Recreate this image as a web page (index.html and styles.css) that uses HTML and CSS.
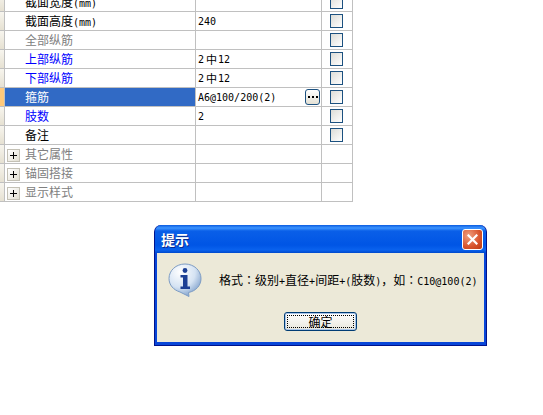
FILE: index.html
```html
<!DOCTYPE html>
<html lang="en">
<head>
  <meta charset="UTF-8" />
  <title>提示</title>
  <link rel="stylesheet" href="styles.css">
</head>
<body>

<!-- Property grid -->
<div class="grid">
  <div class="row">
    <div class="gutter"></div>
    <div class="name">截面宽度<span class="unit">(mm)</span></div>
    <div class="value"></div>
    <div class="check"><span class="box"></span></div>
  </div>
  <div class="row">
    <div class="gutter"></div>
    <div class="name">截面高度<span class="unit">(mm)</span></div>
    <div class="value"><span class="num">240</span></div>
    <div class="check"><span class="box"></span></div>
  </div>
  <div class="row">
    <div class="gutter"></div>
    <div class="name grey">全部纵筋</div>
    <div class="value"></div>
    <div class="check"><span class="box"></span></div>
  </div>
  <div class="row">
    <div class="gutter"></div>
    <div class="name blue">上部纵筋</div>
    <div class="value"><span class="num">2</span><span class="bar">中</span><span class="num">12</span></div>
    <div class="check"><span class="box"></span></div>
  </div>
  <div class="row">
    <div class="gutter"></div>
    <div class="name blue">下部纵筋</div>
    <div class="value"><span class="num">2</span><span class="bar">中</span><span class="num">12</span></div>
    <div class="check"><span class="box"></span></div>
  </div>
  <div class="row">
    <div class="gutter active"></div>
    <div class="name selected">箍筋</div>
    <div class="value editing">
      <span class="num">A6@100/200(2)</span>
      <button class="more">
        <svg width="10" height="2" viewBox="0 0 10 2"><path d="M0 0h2v2H0zM4 0h2v2H4zM8 0h2v2H8z" fill="#000"/></svg>
      </button>
    </div>
    <div class="check"><span class="box"></span></div>
  </div>
  <div class="row">
    <div class="gutter"></div>
    <div class="name blue">肢数</div>
    <div class="value"><span class="num">2</span></div>
    <div class="check"><span class="box"></span></div>
  </div>
  <div class="row">
    <div class="gutter"></div>
    <div class="name">备注</div>
    <div class="value"></div>
    <div class="check"><span class="box"></span></div>
  </div>
  <div class="row group">
    <div class="gutter"><span class="plus"></span></div>
    <div class="name grey">其它属性</div>
    <div class="value"></div>
    <div class="check"></div>
  </div>
  <div class="row group">
    <div class="gutter"><span class="plus"></span></div>
    <div class="name grey">锚固搭接</div>
    <div class="value"></div>
    <div class="check"></div>
  </div>
  <div class="row group">
    <div class="gutter"><span class="plus"></span></div>
    <div class="name grey">显示样式</div>
    <div class="value"></div>
    <div class="check"></div>
  </div>
</div>

<!-- Message box -->
<div class="dialog">
  <div class="titlebar">
    <span class="title">提示</span>
    <span class="close">
      <svg width="11" height="11" viewBox="0 0 11 11"><path d="M1.500 1.500l8 8M9.500 1.500l-8 8" stroke="#fff" stroke-width="2.200" stroke-linecap="square" fill="none"/></svg>
    </span>
  </div>
  <div class="dialog-body">
    <div class="message">
      <svg class="info" width="34" height="34" viewBox="0 0 34 34">
        <defs>
          <radialGradient id="bubble" cx="0.35" cy="0.25" r="0.85">
            <stop offset="0" stop-color="#ffffff"/>
            <stop offset="0.55" stop-color="#d5e3f3"/>
            <stop offset="1" stop-color="#6f94c4"/>
          </radialGradient>
        </defs>
        <path d="M17 1C8 1 1 7.500 1 15.500C1 22 5.500 27 12 29L21 33.500L20.500 29.500C28 28 33 22.500 33 15.500C33 7.500 26 1 17 1Z" fill="url(#bubble)" stroke="#7d9cc4" stroke-width="1"/>
        <circle cx="17" cy="7.500" r="2.400" fill="#1c3f94"/>
        <path d="M12.500 12H19.500V23.500H22V26H12.500V23.500H15V14.500H12.500Z" fill="#1c3f94"/>
      </svg>
      <span class="text">格式<span class="mid">：</span>级别<span class="num">+</span>直径<span class="num">+</span>间距<span class="num">+(</span>肢数<span class="num">)</span>，如<span class="mid">：</span><span class="num">C10@100(2)</span></span>
    </div>
    <div class="actions">
      <button class="ok"><span class="ok-focus">确定</span></button>
    </div>
  </div>
</div>

</body>
</html>
```

FILE: styles.css
```css
html, body { margin:0; padding:0; height:100%; overflow:hidden; background:#fff; }
body { position:relative; color:#000; font-family:"Noto Sans CJK SC", sans-serif; font-size:12px; }

.num, .unit { font-family:"DejaVu Sans Mono", "Liberation Mono", monospace; font-size:10px; }
.mid { font-family:"Noto Sans CJK TC", sans-serif; }

/* property grid, first row is scrolled off by 7px */
.grid { width:353px; margin-top:-7px; }
.row { display:flex; height:19px; box-sizing:border-box; border-bottom:1px solid #c0c0c0; }
.gutter { width:5px; flex:none; box-sizing:border-box; background:linear-gradient(to bottom,#f7f5ee,#e6e1d2); border-right:1px solid #c0c0c0; position:relative; }
.gutter.active { background:#ffc97a; }
.name { width:191px; flex:none; box-sizing:border-box; padding-left:20px; border-right:1px solid #c0c0c0; line-height:18px; white-space:nowrap; }
.value { width:126px; flex:none; box-sizing:border-box; padding-left:2px; border-right:1px solid #c0c0c0; line-height:17px; display:flex; align-items:center; justify-content:flex-start; }
.check { width:31px; flex:none; box-sizing:border-box; border-right:1px solid #c0c0c0; display:flex; align-items:center; justify-content:center; padding-right:2px; }

.grey { color:#808080; }
.blue { color:#0000ff; }
.selected { background:#316ac5; color:#fff; }
.bar { margin:0 1px 0 2px; font-size:11px; }
.editing { justify-content:space-between; padding-right:1px; }

.box { display:block; width:13px; height:14px; box-sizing:border-box; border:1px solid #1c5180; background:linear-gradient(135deg,#dcdcd7,#ffffff); }

.more { width:15px; height:16px; padding:0; display:flex; align-items:center; justify-content:center; border:1px solid #1c5180; border-radius:3px; background:linear-gradient(to bottom,#ffffff,#e3e0d4); }

.plus { position:absolute; left:7px; top:4px; width:13px; height:13px; box-sizing:border-box; border:1px solid #c4c1b5; background:linear-gradient(135deg,#fff,#e2dfd2); }
.plus::before { content:""; position:absolute; left:2px; top:5px; width:7px; height:1px; background:#000; }
.plus::after { content:""; position:absolute; left:5px; top:2px; width:1px; height:7px; background:#000; }

/* message box */
.dialog { position:absolute; left:154px; top:225px; width:333px; height:121px; box-sizing:border-box; display:flex; flex-direction:column; background:#0846d8; border-radius:7px 7px 0 0; border:1px solid #00138c; border-top:none; }
.titlebar { height:28px; flex:none; display:flex; align-items:center; justify-content:space-between; padding:0 3px 0 6px; border-radius:7px 7px 0 0; background:linear-gradient(to bottom,#0a5be0 0,#3d95ff 3px,#0a5fe8 6px,#0055e5 20px,#0a62ee 25px,#0049cc 28px); }
.title { color:#fff; font-size:14px; font-weight:bold; text-shadow:1px 1px 0 #0a2a90; }
.close { width:21px; height:21px; box-sizing:border-box; display:flex; align-items:center; justify-content:center; border:1px solid #fff; border-radius:3px; background:radial-gradient(circle at 30% 30%,#f0a080,#d8532c 60%,#b93a14); }
.dialog-body { flex:1; margin:0 2px 3px; background:#ece9d8; display:flex; flex-direction:column; }
.message { display:flex; align-items:center; padding:10px 0 0 11px; }
.text { margin-left:17px; margin-top:-2px; white-space:nowrap; }
.actions { display:flex; justify-content:center; margin-top:15px; }
.ok { width:73px; height:19px; padding:2px; box-sizing:border-box; border:1px solid #003c74; border-radius:3px; background:linear-gradient(to bottom,#ffffff,#e8e6dc); font-family:inherit; font-size:12px; color:#000; box-shadow:inset 0 0 0 1px #a9c5ea; }
.ok-focus { display:flex; align-items:center; justify-content:center; height:100%; padding-bottom:1px; border:1px dotted #000; box-sizing:border-box; }
```
